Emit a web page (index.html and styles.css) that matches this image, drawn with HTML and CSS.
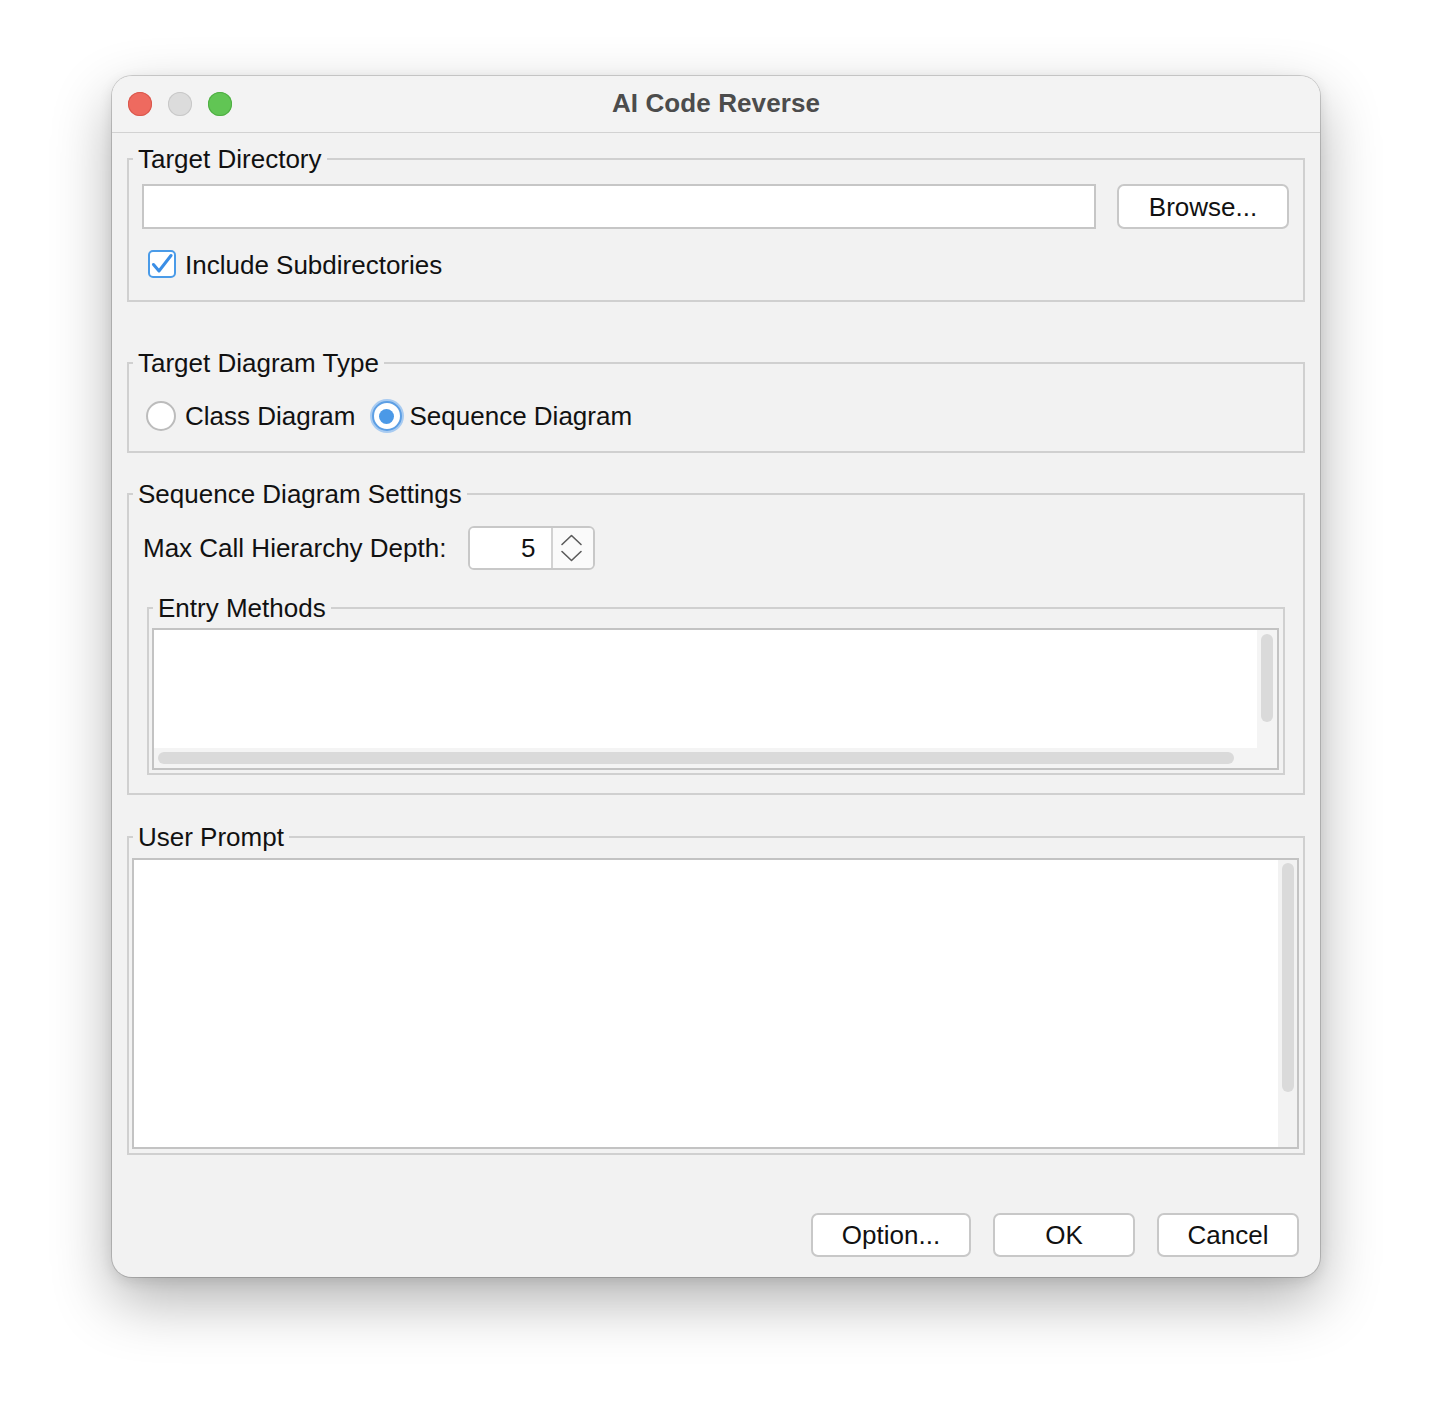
FILE: index.html
```html
<!DOCTYPE html>
<html lang="en">
<head>
<meta charset="utf-8">
<title>AI Code Reverse</title>
<link rel="stylesheet" href="styles.css">
</head>
<body>
<div class="window">
  <div class="titlebar">
    <div class="lights">
      <span class="light red"></span>
      <span class="light gray"></span>
      <span class="light green"></span>
    </div>
    <div class="title">AI Code Reverse</div>
    <div></div>
  </div>

  <div class="content">
    <fieldset class="group g-target">
      <legend>Target Directory</legend>
      <div class="body body-target">
        <div class="dir-row">
          <div class="textfield"></div>
          <button class="btn btn-browse">Browse...</button>
        </div>
        <div class="check-row">
          <span class="checkbox">
            <svg width="28" height="28" viewBox="0 0 28 28"><polyline points="5.5,14.5 11,21 23,5.5" fill="none" stroke="#3a8ee6" stroke-width="3" stroke-linecap="round" stroke-linejoin="round"/></svg>
          </span>
          <span class="label">Include Subdirectories</span>
        </div>
      </div>
    </fieldset>

    <fieldset class="group g-type">
      <legend>Target Diagram Type</legend>
      <div class="body body-type">
        <span class="radio"></span>
        <span class="label">Class Diagram</span>
        <span class="radio selected"><span class="dot"></span></span>
        <span class="label">Sequence Diagram</span>
      </div>
    </fieldset>

    <fieldset class="group g-settings">
      <legend>Sequence Diagram Settings</legend>
      <div class="body body-settings">
        <div class="depth-row">
          <span class="label">Max Call Hierarchy Depth:</span>
          <div class="spinner">
            <div class="spin-value">5</div>
            <div class="spin-arrows">
              <svg width="40" height="40" viewBox="0 0 40 40">
                <polyline points="9,16.5 18.5,7.5 28,16.5" fill="none" stroke="#5a5a5a" stroke-width="1.6" stroke-linecap="round" stroke-linejoin="round"/>
                <polyline points="9,23.5 18.5,32.5 28,23.5" fill="none" stroke="#5a5a5a" stroke-width="1.6" stroke-linecap="round" stroke-linejoin="round"/>
              </svg>
            </div>
          </div>
        </div>

        <fieldset class="group g-entry">
          <legend>Entry Methods</legend>
          <div class="body body-entry">
            <div class="scrollpane list-pane">
              <div class="viewport"></div>
              <div class="vtrack"><div class="vthumb list-vthumb"></div></div>
              <div class="htrack"><div class="hthumb"></div></div>
              <div class="corner"></div>
            </div>
          </div>
        </fieldset>
      </div>
    </fieldset>

    <fieldset class="group g-prompt">
      <legend>User Prompt</legend>
      <div class="body body-prompt">
        <div class="scrollpane prompt-pane">
          <div class="viewport"></div>
          <div class="vtrack"><div class="vthumb prompt-vthumb"></div></div>
        </div>
      </div>
    </fieldset>
  </div>

  <div class="buttons">
    <button class="btn btn-option">Option...</button>
    <button class="btn btn-ok">OK</button>
    <button class="btn btn-cancel">Cancel</button>
  </div>
</div>
</body>
</html>
```

FILE: styles.css
```css
* {
  box-sizing: border-box;
}

html, body {
  margin: 0;
  padding: 0;
  background: #ffffff;
}

body {
  width: 1432px;
  height: 1426px;
  font-family: "Liberation Sans", Arial, sans-serif;
  font-size: 26px;
  color: #111111;
  overflow: hidden;
}

.window {
  margin: 76px 0 0 112px;
  width: 1208px;
  height: 1201px;
  border-radius: 20px;
  background: #f2f2f2;
  box-shadow: 0 0 0 1px rgba(0, 0, 0, 0.16), 0 24px 60px rgba(0, 0, 0, 0.30), 0 4px 14px rgba(0, 0, 0, 0.10);
  overflow: hidden;
  display: flex;
  flex-direction: column;
}

/* ---------- title bar ---------- */
.titlebar {
  height: 57px;
  flex: none;
  background: #f3f3f3;
  border-bottom: 1px solid #d2d2d2;
  display: grid;
  grid-template-columns: 1fr auto 1fr;
  align-items: center;
}

.lights {
  display: flex;
  gap: 16px;
  padding-left: 16px;
}

.light {
  width: 24px;
  height: 24px;
  border-radius: 50%;
  display: block;
}

.light.red {
  background: #ee6a5f;
  box-shadow: inset 0 0 0 1px #d9584d;
}

.light.gray {
  background: #dcdcdc;
  box-shadow: inset 0 0 0 1px #c8c8c8;
}

.light.green {
  background: #61c554;
  box-shadow: inset 0 0 0 1px #4fae43;
}

.title {
  font-weight: bold;
  font-size: 26px;
  color: #4c4c4c;
  line-height: 30px;
  margin-top: -2px;
  letter-spacing: 0.1px;
}

/* ---------- groups ---------- */
.content {
  padding: 0 15px;
}

.group {
  margin: 0;
  padding: 0;
  border: 2px solid #d0d0d0;
  min-width: 0;
}

.group > legend {
  margin-left: 4px;
  padding: 0 5px;
  line-height: 30px;
  height: 30px;
  font-size: 26px;
  color: #111111;
}

.label {
  line-height: 30px;
  white-space: nowrap;
}

.g-target {
  margin-top: 11px;
}

.body-target {
  padding: 10px 14px 22px 13px;
}

.dir-row {
  display: flex;
  height: 45px;
}

.textfield {
  flex: 1;
  background: #ffffff;
  border: 2px solid #c6c6c6;
}

.btn {
  font-family: "Liberation Sans", Arial, sans-serif;
  font-size: 26px;
  color: #111111;
  background: #ffffff;
  border: 2px solid #c8c8c8;
  border-radius: 7px;
  padding: 0;
  height: 44px;
  line-height: 38px;
}

.btn-browse {
  width: 172px;
  height: 45px;
  margin-left: 21px;
}

.check-row {
  display: flex;
  align-items: center;
  margin-top: 21px;
  padding-left: 6px;
  height: 28px;
  gap: 9px;
}

.check-row .label {
  margin-top: 2px;
}

.checkbox {
  width: 28px;
  height: 28px;
  border: 2px solid #4a9be8;
  border-radius: 5px;
  background: #ffffff;
  display: block;
}

.checkbox svg {
  display: block;
  margin: -2px 0 0 -2px;
}

.g-type {
  margin-top: 46px;
}

.body-type {
  display: flex;
  align-items: center;
  padding: 23px 17px 20px 17px;
  height: 73px;
}

.radio {
  width: 30px;
  height: 30px;
  border-radius: 50%;
  border: 2px solid #bcbcbc;
  background: #ffffff;
  display: flex;
  align-items: center;
  justify-content: center;
  flex: none;
  margin-right: 9px;
}

.radio.selected {
  border: 2px solid #5d9fe4;
  box-shadow: 0 0 0 2px #a8cbf1;
  margin-left: 16px;
  margin-right: 8px;
}

.radio .dot {
  width: 15px;
  height: 15px;
  border-radius: 50%;
  background: #4b99e7;
}

.g-settings {
  margin-top: 26px;
}

.body-settings {
  padding: 17px 18px 18px 14px;
}

.depth-row {
  display: flex;
  align-items: center;
  height: 44px;
}

.spinner {
  margin-left: 22px;
  width: 127px;
  height: 44px;
  border: 2px solid #c8c8c8;
  border-radius: 6px;
  display: flex;
  overflow: hidden;
}

.spin-value {
  width: 84px;
  background: #ffffff;
  text-align: right;
  padding-right: 16px;
  line-height: 40px;
  border-right: 2px solid #d2d2d2;
}

.spin-arrows {
  flex: 1;
  background: #fafafa;
}

.spin-arrows svg {
  display: block;
}

.g-entry {
  margin: 23px 0 0 4px;
}

.body-entry {
  padding: 5px 4px 3px 3px;
}

.scrollpane {
  border: 2px solid #c3c3c3;
  background: #f4f4f4;
  display: grid;
}

.list-pane {
  height: 142px;
  grid-template-columns: 1fr 20px;
  grid-template-rows: 1fr 20px;
}

.viewport {
  background: #ffffff;
}

.vtrack {
  background: #f4f4f4;
  padding: 4px 0 0 4px;
}

.vthumb {
  width: 12px;
  border-radius: 6px;
  background: #dadada;
}

.list-vthumb {
  height: 88px;
}

.htrack {
  background: #f4f4f4;
  padding: 4px 0 0 4px;
}

.hthumb {
  width: 1076px;
  height: 12px;
  border-radius: 6px;
  background: #dadada;
}

.corner {
  background: #f4f4f4;
}

.g-prompt {
  margin-top: 27px;
}

.body-prompt {
  padding: 6px 4px 4px 3px;
}

.prompt-pane {
  height: 291px;
  grid-template-columns: 1fr 19px;
}

.prompt-pane .vtrack {
  background: #f2f2f2;
  padding: 3px 0 0 4px;
}

.prompt-vthumb {
  height: 229px;
}

/* ---------- bottom buttons ---------- */
.buttons {
  margin-top: auto;
  display: flex;
  justify-content: flex-end;
  gap: 22px;
  padding: 0 21px 20px 0;
}

.btn-option {
  width: 160px;
}

.btn-ok {
  width: 142px;
}

.btn-cancel {
  width: 142px;
}
```
